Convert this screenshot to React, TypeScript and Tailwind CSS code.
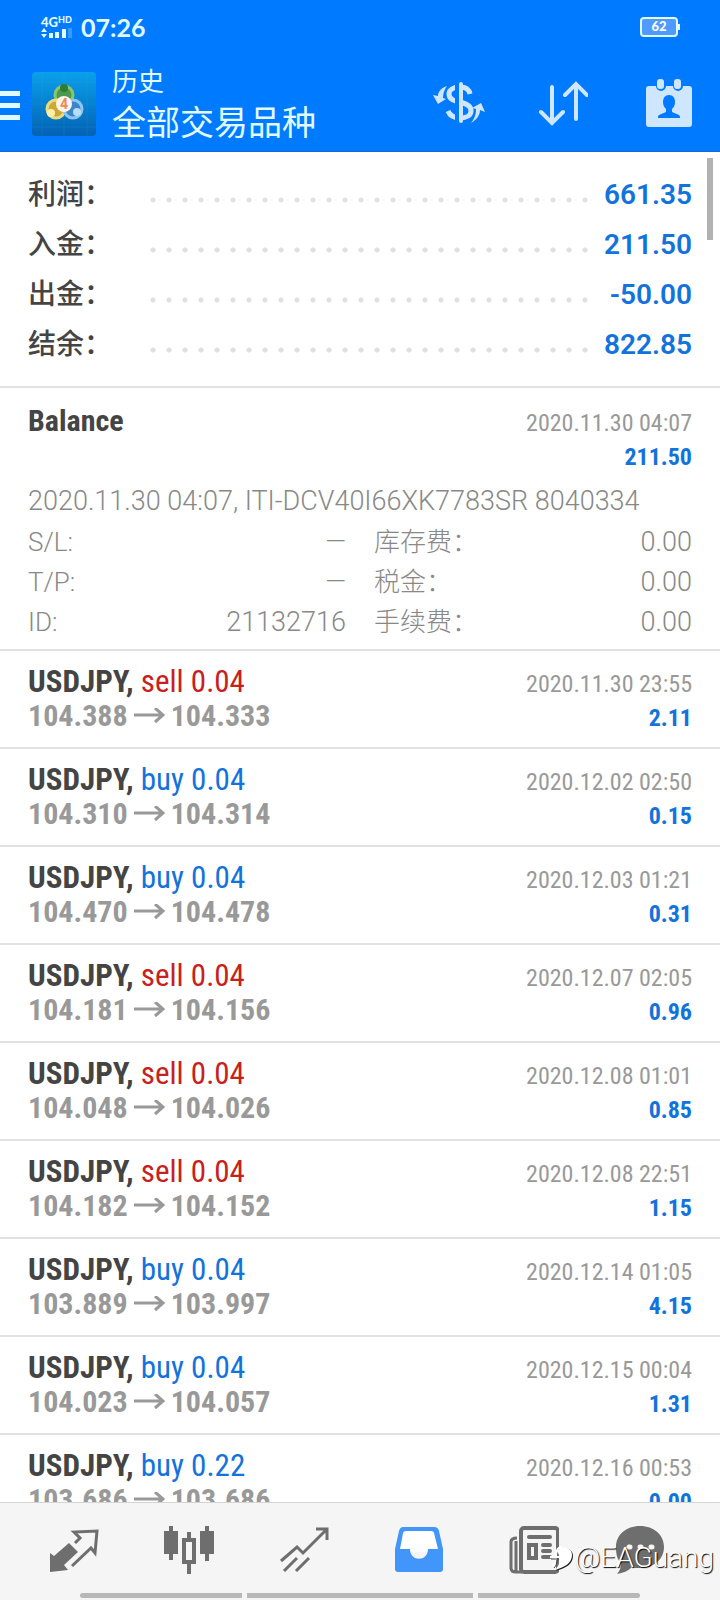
import React from 'react';

interface Deal {
  type: 'buy' | 'sell';
  volume: string;
  open: string;
  close: string;
  time: string;
  profit: string;
}

const summary = [
  { label: '利润：', value: '661.35' },
  { label: '入金：', value: '211.50' },
  { label: '出金：', value: '-50.00' },
  { label: '结余：', value: '822.85' }
];

const details = [
  { label: 'S/L:', value: '—' },
  { label: '库存费：', value: '0.00' },
  { label: 'T/P:', value: '—' },
  { label: '税金：', value: '0.00' },
  { label: 'ID:', value: '21132716' },
  { label: '手续费：', value: '0.00' }
];

const deals: Deal[] = [
  { type: 'sell', volume: '0.04', open: '104.388', close: '104.333', time: '2020.11.30 23:55', profit: '2.11' },
  { type: 'buy', volume: '0.04', open: '104.310', close: '104.314', time: '2020.12.02 02:50', profit: '0.15' },
  { type: 'buy', volume: '0.04', open: '104.470', close: '104.478', time: '2020.12.03 01:21', profit: '0.31' },
  { type: 'sell', volume: '0.04', open: '104.181', close: '104.156', time: '2020.12.07 02:05', profit: '0.96' },
  { type: 'sell', volume: '0.04', open: '104.048', close: '104.026', time: '2020.12.08 01:01', profit: '0.85' },
  { type: 'sell', volume: '0.04', open: '104.182', close: '104.152', time: '2020.12.08 22:51', profit: '1.15' },
  { type: 'buy', volume: '0.04', open: '103.889', close: '103.997', time: '2020.12.14 01:05', profit: '4.15' },
  { type: 'buy', volume: '0.04', open: '104.023', close: '104.057', time: '2020.12.15 00:04', profit: '1.31' },
  { type: 'buy', volume: '0.22', open: '103.686', close: '103.686', time: '2020.12.16 00:53', profit: '0.00' }
];

const condensed = "font-['Roboto_Condensed','Liberation_Sans_Narrow',Roboto,sans-serif]";

const AppLogo = () => (
  <svg className="w-16 h-16" viewBox="0 0 64 64">
    <defs>
      <linearGradient id="sky" x1="0" y1="0" x2="0" y2="1">
        <stop offset="0" stopColor="#0aa0ea" />
        <stop offset="1" stopColor="#0462b4" />
      </linearGradient>
    </defs>
    <rect width="64" height="64" rx="4" fill="url(#sky)" />
    <path d="M10 0v64M32 0v64M55 0v64M0 10h64M0 32h64M0 55h64" stroke="#35b5ee" strokeOpacity=".15" />
    <circle cx="32" cy="23" r="9" fill="#4a9a50" stroke="#8cc46c" strokeWidth="3" />
    <circle cx="24" cy="37" r="9" fill="#c9a93a" stroke="#eadb7c" strokeWidth="3" />
    <circle cx="41" cy="37" r="9" fill="#3a86c8" stroke="#8cc6ee" strokeWidth="3" />
    <circle cx="32" cy="16" r="4" fill="#2f7c34" />
    <circle cx="19" cy="41" r="4" fill="#fbf0a8" />
    <circle cx="45" cy="40" r="4" fill="#b4def8" />
    <circle cx="32" cy="32" r="8" fill="#fff4ea" />
    <text x="32" y="37" textAnchor="middle" fontSize="14" fontWeight="700" fill="#e88a5a" fontFamily="Roboto, sans-serif">4</text>
  </svg>
);

const StatusBar = () => (
  <div className="flex items-center justify-between h-[54px] pl-[41px] pr-10 text-[#e0fbff]">
    <div className="flex items-center gap-2">
      <div className="w-8 font-['Lato',sans-serif] font-black">
        <div className="flex items-start text-[13px] leading-3">
          4G<span className="text-[9px] leading-2">HD</span>
        </div>
        <svg className="w-8 h-[10px]" viewBox="0 0 32 10" fill="currentColor">
          <path d="M0 4L3 0l3 4zM0 6l3 4 3-4zM8 5h4v5H8zM14 4h4v6h-4zM21 1h4v9h-4z" />
          <path d="M27 0h4v10h-4z" opacity=".25" />
        </svg>
      </div>
      <span className="font-['Lato',sans-serif] font-bold text-[25px] leading-8">07:26</span>
    </div>
    <div className="flex items-center">
      <div className="flex items-center justify-center w-[38px] h-5 rounded border-2 border-[#e0fbff] bg-[#4f9bff] font-['Lato',sans-serif] font-black text-[13px] text-white">
        62
      </div>
      <div className="w-0.5 h-1.5 bg-[#e0fbff]" />
    </div>
  </div>
);

const Header = () => (
  <header className="shrink-0 bg-[#007aff] border-b border-[#1a66d6]">
    <StatusBar />
    <div className="flex items-center h-[97px] pr-7">
      <button aria-label="menu" className="flex flex-col gap-[7px] w-5 mr-3 mt-1.5">
        <span className="h-[5px] w-full bg-[#e0fbff]" />
        <span className="h-[5px] w-full bg-[#e0fbff]" />
        <span className="h-[5px] w-full bg-[#e0fbff]" />
      </button>
      <div className="mt-0.5"><AppLogo /></div>
      <div className="ml-4 flex-1 font-['Noto_Sans_CJK_SC',sans-serif] text-[#e0fbff]">
        <div className="text-[26px] leading-9">历史</div>
        <h1 className="text-[34px] leading-[46px] font-normal">全部交易品种</h1>
      </div>
      <div className="flex items-center gap-12 text-[#cfe6ff]">
        <button aria-label="currency" className="pr-1">
          <svg className="w-[54px] h-12" viewBox="0 0 54 48" fill="none" stroke="currentColor">
            <path d="M38 15c-1-5-5-7-10-7-7 0-11 3-11 7 0 5 4 7 11 8 7 2 11 4 11 9 0 4-4 7-11 7-6 0-10-2-12-7" strokeWidth="5" />
            <path d="M25 4v39" stroke="#007aff" strokeWidth="4" />
            <path d="M29 5v37" strokeWidth="4" strokeLinecap="round" />
            <path d="M15 7C8 9 6 14 6 17l-5-1 5 9 8-5-3-1c0-4 1-8 4-12zM39 44c7-4 9-9 9-13l5 2-4-9-9 5 4 1c0 5-1 9-5 14z" fill="currentColor" stroke="none" />
          </svg>
        </button>
        <button aria-label="sort" className="pr-2.5">
          <svg className="w-[50px] h-12" viewBox="0 0 50 48" fill="none" stroke="currentColor" strokeWidth="4" strokeLinecap="round">
            <path d="M14 8v36M3 33l11 11 11-11M38 40V5M27 16L38 5l11 11" />
          </svg>
        </button>
        <button aria-label="period">
          <svg className="w-[46px] h-12" viewBox="0 0 46 48">
            <rect y="7" width="46" height="41" rx="3" fill="currentColor" />
            <path d="M10 0h10v7a5 5 0 0 1-10 0zM27 0h10v7a5 5 0 0 1-10 0z" fill="#007aff" />
            <rect x="11" width="7" height="10" rx="3" fill="currentColor" />
            <rect x="28" width="7" height="10" rx="3" fill="currentColor" />
            <path d="M23 16c-4 0-6 3-6 7 0 3 1 5 3 7v3l-7 3c-1 1-1 2-1 3h22c0-1 0-2-1-3l-7-3v-3c2-2 3-4 3-7 0-4-2-7-6-7z" fill="#007aff" />
          </svg>
        </button>
      </div>
    </div>
  </header>
);

const Arrow = () => (
  <svg className="w-[31px] h-4 mx-1.5" viewBox="0 0 31 16" fill="none" stroke="currentColor" strokeWidth="3">
    <path d="M0 7h29M21 0l8 7-8 7" />
  </svg>
);

const navItems = [
  {
    name: '行情',
    icon: (
      <>
        <path d="M1 28l4 3 15-13 9 9-14 13 4 5-18 2z" fill="currentColor" />
        <path d="M26 18l5-5-6-6 23-1-2 22-4-5-19 18" fill="none" stroke="currentColor" strokeWidth="3" />
      </>
    )
  },
  {
    name: '图表',
    icon: (
      <>
        <path d="M0 6h5V1h4v5h5v23H9v6H5v-6H0zM36 6h5V1h4v5h5v23h-5v7h-4v-7h-5z" fill="currentColor" />
        <path d="M23 7h4v6h5v26h-5v10h-4V39h-5V13h5zM22 17v18h6V17z" fill="currentColor" fillRule="evenodd" />
      </>
    )
  },
  {
    name: '交易',
    icon: <path d="M2 36l16-14 6 6L47 5M37 4h11v11M5 46l13-13M17 46l13-13" fill="none" stroke="currentColor" strokeWidth="3" />
  },
  {
    name: '历史',
    icon: (
      <>
        <path d="M11 5h28l7 22H4z" fill="#fff" />
        <path d="M9 2h31c3 0 4 1 5 4l4 18v20c0 2-1 3-3 3H4c-2 0-3-1-3-3V24L5 6c1-3 2-4 4-4zM12 6c-2 0-3 1-3 2L6 24h10c0 13 18 13 18 0h10L40 8c0-1-1-2-3-2z" fill="currentColor" fillRule="evenodd" />
      </>
    )
  },
  {
    name: '新闻',
    icon: (
      <>
        <rect x="12" y="3" width="37" height="44" rx="3" fill="none" stroke="currentColor" strokeWidth="4" />
        <path d="M8 13c-4 0-6 1-6 4v26c0 3 2 4 5 4h6M7 16v31" fill="none" stroke="currentColor" strokeWidth="3" />
        <path d="M20 12h21M34 20h7M34 26h7M34 32h7" stroke="currentColor" strokeWidth="4" strokeLinecap="round" />
        <rect x="20" y="20" width="7" height="13" fill="none" stroke="currentColor" strokeWidth="4" />
      </>
    )
  },
  {
    name: '消息',
    icon: (
      <>
        <path d="M25 1c14 0 24 9 24 21S39 43 25 43c-3 0-6 0-8-1-4 4-9 6-15 7 3-3 4-7 4-11-4-4-5-9-5-16C1 10 11 1 25 1z" fill="currentColor" />
        <path d="M14 22h1M25 22h1M36 22h1" stroke="#f5f5f5" strokeWidth="5" strokeLinecap="round" />
      </>
    )
  }
];

const BottomNav = () => (
  <nav className="relative shrink-0 h-[98px] bg-[#f5f5f5] border-t border-[#d4d4d4] flex flex-col">
    <div className="flex flex-1 items-center pt-1 pl-4 pr-8">
      {navItems.map((item, i) => (
        <button
          key={item.name}
          aria-label={item.name}
          className={`flex justify-center ${i === 5 ? 'flex-[97]' : 'flex-[115]'} ${i === 3 ? 'text-[#4296fb]' : 'text-[#6e6e6e]'}`}
        >
          <svg className="w-[50px] h-[50px]" viewBox="0 0 50 50">{item.icon}</svg>
        </button>
      ))}
    </div>
    <div className="flex gap-[5px] px-20 pb-0.5">
      <div className="h-[5px] flex-[162] rounded-l-full bg-[#b8b8b8]" />
      <div className="h-[5px] flex-[226] bg-[#b8b8b8]" />
      <div className="h-[5px] flex-[162] rounded-r-full bg-[#b8b8b8]" />
    </div>
    {/* 水印 */}
    <div className="absolute right-1.5 bottom-6 flex items-center text-white font-['Roboto',sans-serif] font-light text-[28px] leading-9 [text-shadow:1px_1px_1px_#000]">
      <svg className="w-[26px] h-8" viewBox="0 0 26 32">
        <path d="M8 9c5-6 15-4 15 4 0 8-7 12-17 15 4-4 5-9 5-13z" fill="#222" transform="translate(1 1)" />
        <path d="M8 9c5-6 15-4 15 4 0 8-7 12-17 15 4-4 5-9 5-13z" fill="#fff" />
        <path d="M1 15h18M13 5C8 5 7 9 7 14s-1 8-4 10" fill="none" stroke="#fff" strokeWidth="2" />
        <path d="M2 17h8M8 18c0 4-1 6-3 8" fill="none" stroke="#444" />
      </svg>
      @EAGuang
    </div>
  </nav>
);

export default function App() {
  return (
    <div className="relative flex flex-col h-screen overflow-hidden bg-white font-['Roboto','Noto_Sans_CJK_SC',sans-serif] text-[#444]">
      <Header />
      <main className="relative flex-1 min-h-0 overflow-hidden">
        <div className="absolute right-[7px] top-[6px] w-1.5 h-[82px] bg-[#b2b2b2]" />

        <section className="px-7 pt-[18px] pb-4 border-b-2 border-[#e2e2e2]">
          {summary.map(row => (
            <div key={row.label} className="flex items-center h-[50px] text-[28px] leading-[50px] font-medium">
              <span className="w-[117px]">{row.label}</span>
              <span className="flex-1 h-4 mt-2.5 mr-3 bg-[radial-gradient(circle,#e0e0e0_2px,transparent_3px)] bg-[length:16px_16px] bg-repeat-x" />
              <span className="w-[88px] text-right font-semibold text-[#1273dc]">{row.value}</span>
            </div>
          ))}
        </section>

        <section className="px-7 pt-4 pb-[7px] border-b-2 border-[#e2e2e2]">
          <div className={`${condensed} flex items-baseline justify-between h-9 leading-[34px]`}>
            <h2 className="text-[30px] leading-[34px] font-bold">Balance</h2>
            <time className="text-[24px] leading-[34px] text-[#999]">2020.11.30 04:07</time>
          </div>
          <div className={`${condensed} text-right text-[24px] leading-[34px] font-bold text-[#1273dc]`}>211.50</div>
          <p className="mt-[7px] text-[27px] leading-[41px] font-light text-[#888] whitespace-nowrap">2020.11.30 04:07, ITI-DCV40I66XK7783SR 8040334</p>
          <dl className="grid grid-cols-2 gap-x-7 leading-10 text-[#888] font-light">
            {details.map(item => (
              <div key={item.label} className="flex items-baseline justify-between h-10">
                <dt className="text-[26px] leading-10">{item.label}</dt>
                <dd className="text-[27px] leading-10">{item.value}</dd>
              </div>
            ))}
          </dl>
        </section>

        <ul className={condensed}>
          {deals.map(deal => (
            <li key={deal.time} className="px-7 py-3.5 border-b-2 border-[#e2e2e2]">
              <div className="flex items-baseline justify-between h-[34px] text-[31px] leading-[34px]">
                <div>
                  <b>USDJPY,</b>{' '}
                  <span className={deal.type === 'buy' ? 'text-[#1273dc]' : 'text-[#c82020]'}>
                    {deal.type} {deal.volume}
                  </span>
                </div>
                <time className="text-[24px] leading-[34px] text-[#999]">{deal.time}</time>
              </div>
              <div className="flex items-baseline justify-between h-[34px] text-[30px] leading-[34px] font-bold">
                <div className="flex items-center text-[#999]">
                  {deal.open}<Arrow />{deal.close}
                </div>
                <span className="text-[24px] leading-[34px] text-[#1273dc]">{deal.profit}</span>
              </div>
            </li>
          ))}
        </ul>
      </main>
      <BottomNav />
    </div>
  );
}
